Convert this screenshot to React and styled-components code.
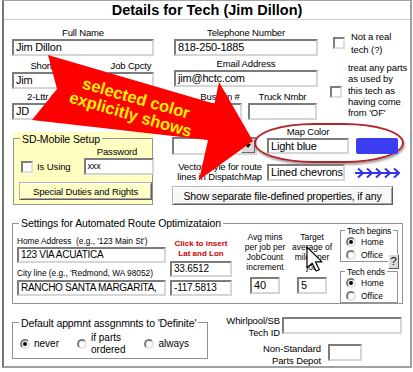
import React from "react";
import styled, { createGlobalStyle } from "styled-components";

const GlobalStyle = createGlobalStyle`
  html, body { margin: 0; padding: 0; background: #ffffff; }
  body { font-family: "Liberation Sans", Arial, sans-serif; color: #000; }
`;

// Page + window frame
const Stage = styled.div`
  position: relative;
  width: 413px;
  height: 372px;
  overflow: hidden;
  background: #fff;
`;

const Window = styled.div`
  box-sizing: border-box;
  margin-left: 2px;
  width: 410px;
  height: 368px;
  border-left: 2px solid #767676;
  border-top: 1px solid #a5a5a5;
  border-right: 2px solid #a0a0a0;
  border-bottom: 2px solid #a0a0a0;
`;

const TitleBar = styled.div`
  height: 18px;
  border-bottom: 1px solid #cdcdcd;
  display: flex;
  align-items: center;
  justify-content: center;
  font-size: 14.5px;
  font-weight: bold;
`;

// Generic layout pieces
const Top = styled.div`
  display: flex;
  padding: 8px 0 0 8px;
`;

const Column = styled.div`
  display: flex;
  flex-direction: column;
  width: ${(p) => p.$w}px;
  margin-left: ${(p) => p.$ml || 0}px;
  margin-top: ${(p) => p.$mt || 0}px;
  align-items: ${(p) => p.$align || "stretch"};
  position: relative;
`;

const Row = styled.div`
  display: flex;
  align-items: ${(p) => p.$align || "flex-start"};
  margin-top: ${(p) => p.$mt || 0}px;
  padding-left: ${(p) => p.$pl || 0}px;
`;

const Field = styled.div`
  display: flex;
  flex-direction: column;
  align-items: center;
  width: ${(p) => p.$w}px;
  margin-top: ${(p) => p.$mt || 0}px;
  margin-left: ${(p) => p.$ml || 0}px;
`;

const Label = styled.div`
  font-size: 9.5px;
  letter-spacing: -0.15px;
  line-height: 10px;
  height: 10px;
  margin-bottom: 1px;
  white-space: nowrap;
`;

const SmallLabel = styled.div`
  font-size: 8.3px;
  line-height: 9px;
  white-space: nowrap;
  margin-top: ${(p) => p.$mt || 0}px;
`;

const TextBox = styled.div`
  box-sizing: border-box;
  width: ${(p) => (p.$w ? p.$w + "px" : "100%")};
  height: ${(p) => p.$h || 17}px;
  margin-top: ${(p) => p.$mt || 0}px;
  margin-left: ${(p) => p.$ml || 0}px;
  border: 2px solid;
  border-color: #7c7c7c #d6d6d6 #d6d6d6 #7c7c7c;
  background: #fff;
  padding: 0 2px;
  font-size: ${(p) => p.$fs || 11}px;
  letter-spacing: ${(p) => p.$ls ?? -0.2}px;
  line-height: ${(p) => (p.$h || 17) - 4}px;
  white-space: nowrap;
  overflow: hidden;
  flex-shrink: 0;
`;

const Check = styled.span`
  box-sizing: border-box;
  display: block;
  width: 12px;
  height: 12px;
  flex-shrink: 0;
  margin-top: ${(p) => p.$mt || 0}px;
  border: 2px solid;
  border-color: #7c7c7c #dedede #dedede #7c7c7c;
  background: #fff;
`;

const CheckItem = styled.div`
  display: flex;
  align-items: center;
  margin-top: ${(p) => p.$mt || 0}px;
  padding-left: ${(p) => p.$pl || 0}px;
`;

const SideText = styled.div`
  margin-left: ${(p) => p.$ml ?? 6}px;
  font-size: 9.5px;
  letter-spacing: -0.1px;
  line-height: ${(p) => p.$lh}px;
  white-space: nowrap;
`;

const Radio = styled.span`
  box-sizing: border-box;
  width: 10px;
  height: 10px;
  border-radius: 50%;
  border: 2px solid;
  border-color: #7d7d7d #e4e4e4 #e4e4e4 #7d7d7d;
  background: #fff;
  display: flex;
  align-items: center;
  justify-content: center;
  flex-shrink: 0;

  &::after {
    content: "";
    width: 4px;
    height: 4px;
    border-radius: 50%;
    background: ${(p) => (p.$on ? "#000" : "transparent")};
  }
`;

const RadioItem = styled.div`
  display: flex;
  align-items: center;
  gap: ${(p) => p.$gap || 4}px;
  height: ${(p) => p.$h || "auto"};
  margin-left: ${(p) => p.$ml || 0}px;
  font-size: ${(p) => p.$fs || 10}px;
  line-height: ${(p) => p.$lh || 12}px;
  white-space: nowrap;
`;

const RaisedButton = styled.div`
  box-sizing: border-box;
  width: ${(p) => p.$w}px;
  height: ${(p) => p.$h}px;
  margin-top: ${(p) => p.$mt || 0}px;
  margin-left: ${(p) => p.$ml || 0}px;
  border: 1px solid;
  border-color: #b4b4b4 #5e5e5e #5e5e5e #b4b4b4;
  box-shadow: inset 1px 1px 0 #ffffff, inset -1px -1px 0 #a8a8a8;
  background: ${(p) => p.$bg || "#f7f7f7"};
  display: flex;
  align-items: center;
  justify-content: center;
  font-size: ${(p) => p.$fs || 10}px;
  letter-spacing: -0.15px;
  white-space: nowrap;
`;

// Group boxes
const Group = styled.div`
  box-sizing: border-box;
  width: ${(p) => p.$w}px;
  margin-top: ${(p) => p.$mt || 0}px;
  margin-left: ${(p) => p.$ml || 0}px;
  border: 1px solid #939393;
  background: ${(p) => p.$bg || "transparent"};
  padding-bottom: ${(p) => p.$pb || 0}px;
`;

const GroupTitle = styled.div`
  width: fit-content;
  margin: ${(p) => p.$top || -7}px 0 0 ${(p) => p.$left || 6}px;
  padding: 0 2px;
  background: ${(p) => p.$bg || "#fff"};
  font-size: ${(p) => p.$fs || 10.5}px;
  line-height: ${(p) => p.$lh || 12}px;
  letter-spacing: -0.1px;
  white-space: nowrap;
`;

// SD-Mobile panel
const MobilePanel = styled.div`
  margin-top: 12px;
  margin-left: 1px;
  width: 140px;
  padding-top: 6px;
  background: #ffffc2;
`;

const PasswordLabel = styled(Label)`
  width: 70px;
  text-align: center;
`;

// Map colour area
const Dropdown = styled.div`
  box-sizing: border-box;
  width: 85px;
  height: 18px;
  margin: 14px 0 0 2px;
  border: 2px solid;
  border-color: #7c7c7c #d6d6d6 #d6d6d6 #7c7c7c;
  background: #fff;
  display: flex;
  justify-content: flex-end;
`;

const DropButton = styled.div`
  box-sizing: border-box;
  width: 14px;
  height: 14px;
  background: #dcdcdc;
  border: 1px solid;
  border-color: #ffffff #6a6a6a #6a6a6a #ffffff;
  display: flex;
  align-items: center;
  justify-content: center;

  &::after {
    content: "";
    border-left: 3px solid transparent;
    border-right: 3px solid transparent;
    border-top: 4px solid #000;
  }
`;

const ColorOval = styled.div`
  box-sizing: border-box;
  width: 150px;
  height: 40px;
  margin-left: -3px;
  border: 2px solid #b3262c;
  border-radius: 60px / 20px;
  box-shadow: 1px 2px 2px rgba(0, 0, 0, 0.35);
  display: flex;
  align-items: flex-end;
  padding: 0 0 7px 11px;
`;

const Swatch = styled.div`
  width: 42px;
  height: 16px;
  margin-left: 7px;
  border-radius: 2px;
  background: #3c3cf2;
`;

const VectorText = styled.div`
  width: 92px;
  text-align: right;
  font-size: 9.5px;
  letter-spacing: -0.15px;
  line-height: 10px;
  margin-top: -1px;
  white-space: nowrap;
`;

// Route settings
const RedNote = styled.div`
  margin-top: 10px;
  color: #cc0000;
  font-size: 8px;
  font-weight: bold;
  line-height: 10px;
  text-align: center;
  white-space: nowrap;
`;

const Note = styled.div`
  margin-top: 3px;
  font-size: 8.5px;
  line-height: 10px;
  text-align: center;
  white-space: nowrap;
`;

const TechTitle = styled(GroupTitle)`
  margin: -5px 0 0 4px;
  font-size: 8.5px;
  line-height: 10px;
`;

const TechOptions = styled.div`
  display: flex;
  flex-direction: column;
  gap: 1px;
  padding-left: 5px;
`;

const HelpButton = styled.div`
  position: absolute;
  left: 48px;
  top: 25px;
  box-sizing: border-box;
  width: 11px;
  height: 15px;
  background: #d9d9d9;
  border: 1px solid;
  border-color: #ffffff #555 #555 #ffffff;
  font-size: 11px;
  line-height: 13px;
  text-align: center;
`;

const DefaultOptions = styled.div`
  display: flex;
  align-items: center;
  height: 29px;
  padding-left: 7px;
`;

const RightLabel = styled.div`
  width: ${(p) => p.$w}px;
  text-align: right;
  font-size: 9.5px;
  letter-spacing: -0.1px;
  line-height: 11.5px;
  white-space: nowrap;
`;

// Overlays (annotation arrow and mouse pointer lie on top of the dialog)
const Overlay = styled.svg`
  position: absolute;
  left: 0;
  top: 0;
  pointer-events: none;
`;

const ChevronIcon = styled.svg`
  margin: 4px 0 0 9px;
`;

function LinedChevrons() {
  const xs = [9, 18, 27, 36, 45];
  return (
    <ChevronIcon width="46" height="12" viewBox="0 0 46 12">
      <line x1="1" y1="6" x2="45" y2="6" stroke="#3434ee" strokeWidth="2" />
      {xs.map((x) => (
        <polyline key={x} points={`${x - 5},1.5 ${x},6 ${x - 5},10.5`} fill="none" stroke="#3434ee" strokeWidth="2" />
      ))}
    </ChevronIcon>
  );
}

function TechBox({ title, mt, pb }) {
  return (
    <Group $w={58} $mt={mt} $pb={pb}>
      <TechTitle>{title}</TechTitle>
      <TechOptions>
        <RadioItem $h="12px" $fs={8.5} $gap={5}>
          <Radio $on />
          Home
        </RadioItem>
        <RadioItem $h="12px" $fs={8.5} $gap={5}>
          <Radio />
          Office
        </RadioItem>
      </TechOptions>
    </Group>
  );
}

export default function App() {
  return (
    <Stage>
      <GlobalStyle />
      <Window>
        <TitleBar>Details for Tech (Jim Dillon)</TitleBar>

        <Top>
          <Column $w={142}>
            <Field $w={142}>
              <Label>Full Name</Label>
              <TextBox>Jim Dillon</TextBox>
            </Field>
            <Row $mt={5}>
              <Field $w={86}>
                <Label>Short Name</Label>
                <TextBox>Jim</TextBox>
              </Field>
              <Field $w={46} $ml={10}>
                <Label>Job Cpcty</Label>
                <TextBox />
              </Field>
            </Row>
            <Field $w={76} $mt={3}>
              <Label>2-Lttr Code</Label>
              <TextBox>JD</TextBox>
            </Field>

            <MobilePanel>
              <Group $w={140} $bg="#ffffc2" $pb={4}>
                <GroupTitle $bg="#ffffc2" $top={-6}>SD-Mobile Setup</GroupTitle>
                <Row $mt={2} $pl={68}>
                  <PasswordLabel>Password</PasswordLabel>
                </Row>
                <Row $align="center" $pl={7}>
                  <Check />
                  <SideText $lh={12} $ml={4}>Is Using</SideText>
                  <TextBox $w={70} $ml={13} $fs={9}>xxx</TextBox>
                </Row>
                <RaisedButton $w={133} $h={18} $mt={7} $ml={5} $bg="#ffffc8" $fs={9.5}>
                  Special Duties and Rights
                </RaisedButton>
              </Group>
            </MobilePanel>
          </Column>

          <Column $w={235} $ml={16}>
            <Row>
              <Column $w={144} $ml={4}>
                <Field $w={144}>
                  <Label>Telephone Number</Label>
                  <TextBox>818-250-1885</TextBox>
                </Field>
                <Field $w={144} $mt={3}>
                  <Label>Email Address</Label>
                  <TextBox>jim@hctc.com</TextBox>
                </Field>
                <Row $mt={5} $pl={24}>
                  <Field $w={44}>
                    <Label>Bus Pin #</Label>
                    <TextBox />
                  </Field>
                  <Field $w={69} $ml={6}>
                    <Label>Truck Nmbr</Label>
                    <TextBox />
                  </Field>
                </Row>
              </Column>
              <Column $w={77} $ml={10}>
                <CheckItem $mt={2} $pl={5}>
                  <Check />
                  <SideText $lh={13}>
                    Not a real
                    <br />
                    tech (?)
                  </SideText>
                </CheckItem>
                <CheckItem $mt={6} $pl={2}>
                  <Check $mt={4} />
                  <SideText $lh={11.25}>
                    treat any parts
                    <br />
                    as used by
                    <br />
                    this tech as
                    <br />
                    having come
                    <br />
                    from 'OF'
                  </SideText>
                </CheckItem>
              </Column>
            </Row>

            <Row $mt={3}>
              <Dropdown>
                <DropButton />
              </Dropdown>
              <ColorOval>
                <Column $w={82} $align="center">
                  <Label>Map Color</Label>
                  <TextBox $h={16}>Light blue</TextBox>
                </Column>
                <Swatch />
              </ColorOval>
            </Row>

            <Row>
              <VectorText>
                Vector style for route
                <br />
                lines in DispatchMap
              </VectorText>
              <TextBox $w={78} $ml={5} $mt={1}>Lined chevrons</TextBox>
              <LinedChevrons />
            </Row>

            <RaisedButton $w={221} $h={19} $mt={4} $ml={2} $fs={10.5}>
              Show separate file-defined properties, if any
            </RaisedButton>
          </Column>
        </Top>

        <Group $w={391} $mt={18} $ml={8}>
          <GroupTitle>Settings for Automated Route Optimizataion</GroupTitle>
          <Row>
            <Column $w={149} $ml={4}>
              <SmallLabel $mt={8}>Home Address&nbsp;&nbsp;(e.g., '123 Main St')</SmallLabel>
              <TextBox $h={16} $mt={1} $fs={10} $ls={-0.3}>123 VIA ACUATICA</TextBox>
              <SmallLabel $mt={6}>City line (e.g., 'Redmond, WA 98052)</SmallLabel>
              <TextBox $h={16} $mt={2} $fs={10} $ls={-0.3}>RANCHO SANTA MARGARITA,</TextBox>
            </Column>
            <Column $w={62} $ml={4}>
              <RedNote>
                Click to insert
                <br />
                Lat and Lon
              </RedNote>
              <TextBox $h={16} $mt={2} $fs={10}>33.6512</TextBox>
              <TextBox $h={16} $mt={3} $fs={10}>-117.5813</TextBox>
            </Column>
            <Column $w={42} $ml={12} $align="center">
              <Note>
                Avg mins
                <br />
                per job per
                <br />
                JobCount
                <br />
                increment
              </Note>
              <TextBox $w={30} $mt={5}>40</TextBox>
            </Column>
            <Column $w={40} $ml={6} $align="center">
              <Note>
                Target
                <br />
                average of
                <br />
                miles per
                <br />
                job
              </Note>
              <TextBox $w={30} $mt={5}>5</TextBox>
            </Column>
            <Column $w={58} $ml={8}>
              <TechBox title="Tech begins" mt={1} />
              <HelpButton>?</HelpButton>
              <TechBox title="Tech ends" mt={9} />
            </Column>
          </Row>
        </Group>

        <Row $pl={8}>
          <Group $w={196} $mt={18}>
            <GroupTitle $top={-6}>Default appmnt assgnmnts to 'Definite'</GroupTitle>
            <DefaultOptions>
              <RadioItem>
                <Radio $on />
                never
              </RadioItem>
              <RadioItem $ml={18} $lh={11.5}>
                <Radio />
                <span>
                  if parts
                  <br />
                  ordered
                </span>
              </RadioItem>
              <RadioItem $ml={19}>
                <Radio />
                always
              </RadioItem>
            </DefaultOptions>
          </Group>
          <Column $w={195} $mt={11}>
            <Row>
              <RightLabel $w={72}>
                Whirlpool/SB
                <br />
                Tech ID
              </RightLabel>
              <TextBox $w={120} $ml={2} $mt={2} />
            </Row>
            <Row $mt={5}>
              <RightLabel $w={113}>
                Non-Standard
                <br />
                Parts Depot
              </RightLabel>
              <TextBox $w={34} $ml={7} $mt={1} />
            </Row>
          </Column>
        </Row>
      </Window>

      <Overlay width="413" height="372" viewBox="0 0 413 372">
        <polygon
          points="48,55 214.5,103.8 219,82 253,141 199,180 208,140 32,120 57,89"
          fill="#fe0000"
        />
        <g
          transform="translate(134 106) rotate(16)"
          fill="#fff000"
          fontFamily="Liberation Sans, Arial, sans-serif"
          fontWeight="bold"
          fontSize="16.5"
          textAnchor="middle"
        >
          <text x="0" y="-2.5">selected color</text>
          <text x="-1" y="14.5">explicitly shows</text>
        </g>
        <g transform="translate(307 247) scale(1.3)">
          <path
            d="M0 0 L0 16 L4 12.5 L7 18.5 L9.5 17.5 L6.5 11.5 L11.5 11.5 Z"
            fill="#fff"
            stroke="#000"
            strokeWidth="0.9"
            strokeLinejoin="round"
          />
        </g>
      </Overlay>
    </Stage>
  );
}
